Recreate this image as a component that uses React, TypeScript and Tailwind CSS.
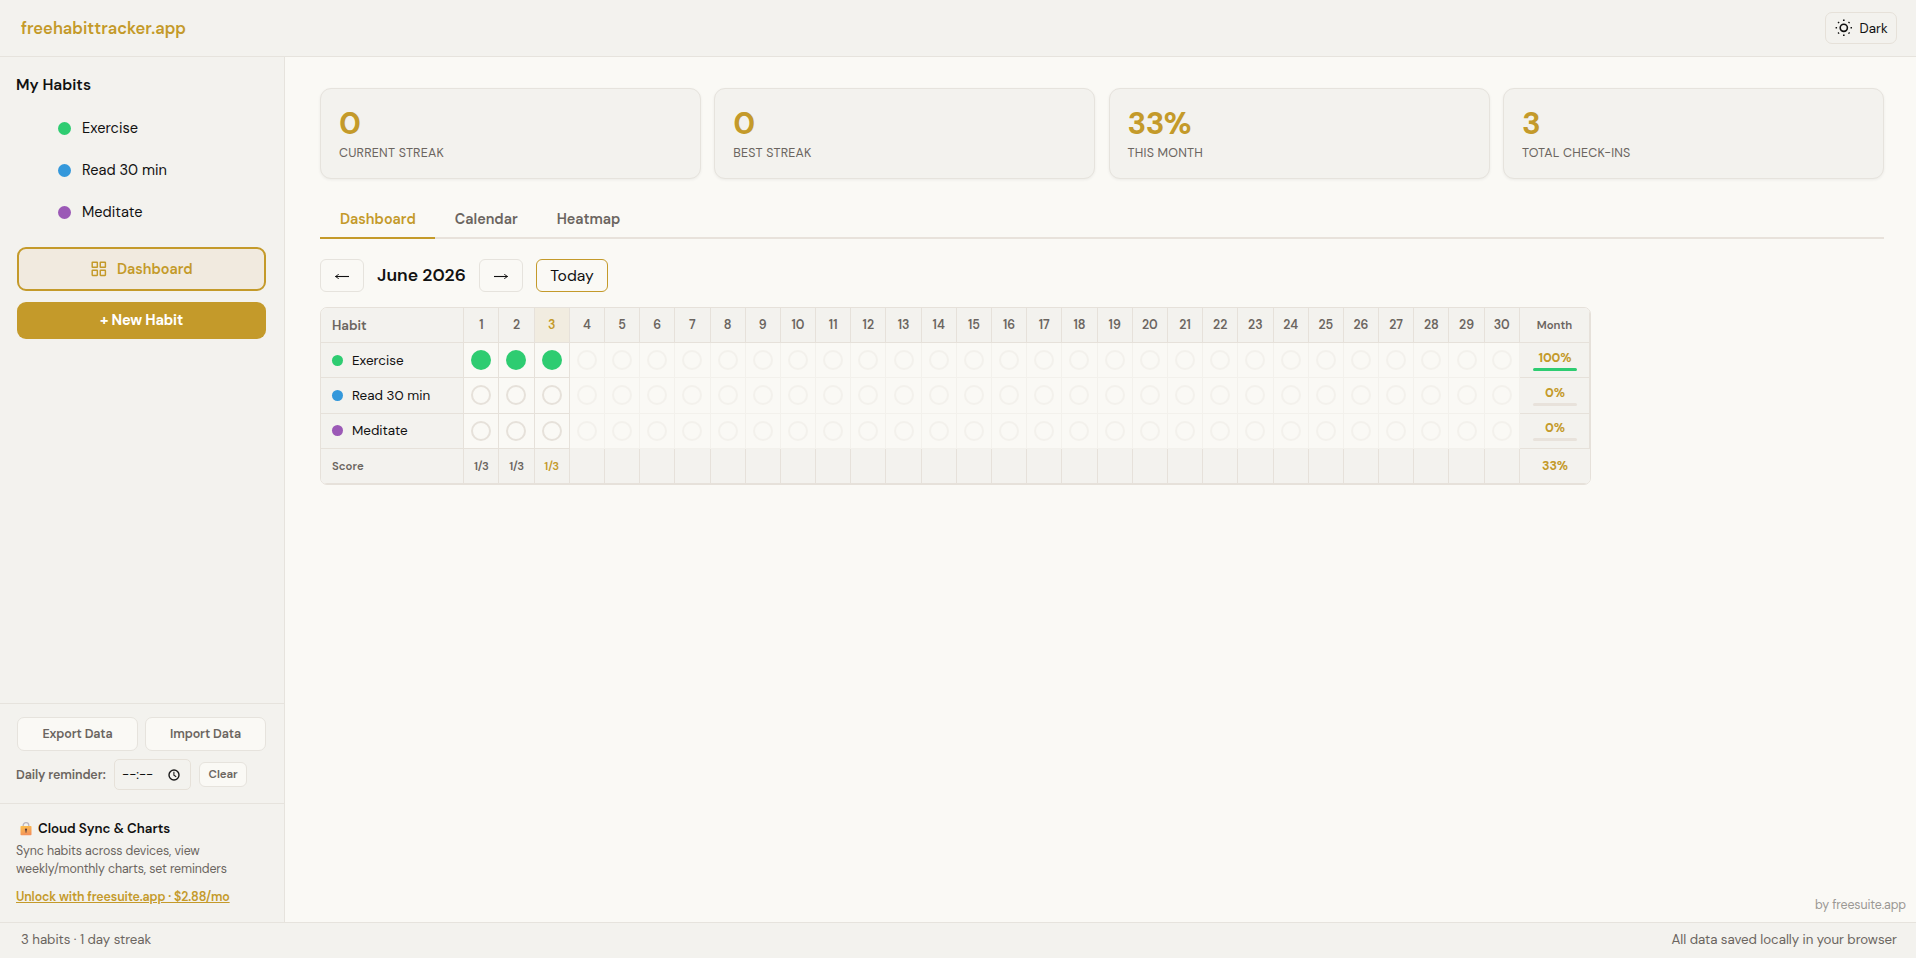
import { Fragment } from 'react';

interface Habit {
  id: string;
  name: string;
  dot: string;
  done: number[];
  month: number;
}

const habits: Habit[] = [
  { id: 'exercise', name: 'Exercise', dot: 'bg-[#2ecc71]', done: [1, 2, 3], month: 100 },
  { id: 'read', name: 'Read 30 min', dot: 'bg-[#3498db]', done: [], month: 0 },
  { id: 'meditate', name: 'Meditate', dot: 'bg-[#9b59b6]', done: [], month: 0 },
];

const stats = [
  { label: 'Current Streak', value: '0' },
  { label: 'Best Streak', value: '0' },
  { label: 'This Month', value: '33%' },
  { label: 'Total Check-ins', value: '3' },
];

const tabs = ['Dashboard', 'Calendar', 'Heatmap'];
const days = Array.from({ length: 30 }, (_, i) => i + 1);
const today = 3;

const SunIcon = () => (
  <svg className="size-[17.6px]" viewBox="0 0 24 24" fill="none" stroke="currentColor" strokeWidth="2.2">
    <circle cx="12" cy="12" r="4.9" />
    <path d="M12 .8v2M12 21.2v2M4.2 4.2l1.3 1.3M18.5 18.5l1.3 1.3M.8 12h2M21.2 12h2M4.2 19.8l1.3-1.3M18.5 5.5l1.3-1.3" />
  </svg>
);

const GridIcon = () => (
  <svg className="size-[17.6px]" viewBox="0 0 24 24" fill="none" stroke="currentColor" strokeWidth="2">
    <rect x="3" y="3" width="7" height="7" rx="0.5" />
    <rect x="14" y="3" width="7" height="7" rx="0.5" />
    <rect x="3" y="14" width="7" height="7" rx="0.5" />
    <rect x="14" y="14" width="7" height="7" rx="0.5" />
  </svg>
);

const ClockIcon = () => (
  <svg className="size-[12px]" viewBox="0 0 12 12" fill="none" stroke="#1a1a1a" strokeWidth="1.4">
    <circle cx="6" cy="6" r="5" />
    <path d="M5.9 2.8v3.4l2.3 1.6" strokeWidth="1.1" />
  </svg>
);

const LockIcon = () => (
  <svg className="h-[14px] w-[12px]" viewBox="0 0 12 14">
    <defs>
      <linearGradient id="lock" x1="0" y1="0" x2="0.3" y2="1">
        <stop offset="0" stopColor="#fcc04a" />
        <stop offset="1" stopColor="#f4935a" />
      </linearGradient>
    </defs>
    <path d="M3.2 5V3.5a2.8 2.8 0 0 1 5.6 0V5" fill="none" stroke="#b9b4be" strokeWidth="1.3" />
    <rect x="0.5" y="4" width="11" height="9.2" rx="0.8" fill="url(#lock)" />
    <circle cx="6" cy="7.6" r="1.1" fill="#5a3b3b" />
    <path d="M6 8v2.6" stroke="#5a3b3b" strokeWidth="1" />
  </svg>
);

const ArrowIcon = ({ flip = false }: { flip?: boolean }) => (
  <svg
    className={flip ? 'mx-auto mt-px h-[7px] w-[14px] rotate-180' : 'mx-auto mt-px h-[7px] w-[14px]'}
    viewBox="0 0 14 7"
    fill="none"
    stroke="currentColor"
  >
    <path d="M0.5 3.5H14" strokeWidth="1.1" />
    <path d="M3.6 1Q2.6 2.8.4 3.5q2.2.7 3.2 2.5" strokeWidth="1" />
  </svg>
);

const Header = () => (
  <header className="flex h-[57px] shrink-0 items-center justify-between border-b border-[#e6e3dd] bg-[#f3f2ee] px-[19px]">
    <div className="pt-[2px] pl-[2px] text-[16.5px] font-semibold text-[#c49a2a]">freehabittracker.app</div>
    <button className="flex h-8 w-[72px] items-center gap-[7px] rounded-[7px] border border-[#e6e1d9] pl-[9px] text-[13.3px]">
      <SunIcon />
      <span className="pt-[2px]">Dark</span>
    </button>
  </header>
);

const Sidebar = () => (
  <aside className="flex w-[285px] shrink-0 flex-col border-r border-[#e6e3dd] bg-[#f3f2ee]">
    <div className="flex-1 pt-[17px] pr-[18px] pl-[17px]">
      <h2 className="-ml-px h-[22px] text-[15.5px] leading-[22px] font-semibold">My Habits</h2>
      <ul className="mt-[11px]">
        {habits.map((habit) => (
          <li key={habit.id} className="flex h-[42px] items-center gap-[11px] pl-[41px] text-[14.6px]">
            <span className={`size-[13px] rounded-full ${habit.dot}`} />
            <span className="pt-px">{habit.name}</span>
          </li>
        ))}
      </ul>
      <button className="mt-[14px] flex h-11 w-full items-center justify-center gap-[9px] rounded-[9px] border-2 border-[#c49a2a] bg-[#f1eadf] text-[14.4px] font-semibold text-[#c49a2a]">
        <GridIcon />
        <span className="pt-[2px]">Dashboard</span>
      </button>
      <button className="mt-[11px] flex h-[37px] w-full items-center justify-center rounded-[9px] bg-[#c49a2a] text-[14.5px] font-bold tracking-[-0.15px] text-white">
        + New Habit
      </button>
    </div>

    <div className="h-[100px] border-t border-[#e6e3dd] pt-[13px] pr-[18px] pl-[17px] text-[12.5px] font-semibold tracking-[-0.1px] text-[#6b6560]">
      <div className="flex gap-[7px]">
        <button className="h-[34px] flex-1 rounded-[7px] border border-[#e6e3dd] bg-[#faf9f5]">Export Data</button>
        <button className="h-[34px] flex-1 rounded-[7px] border border-[#e6e3dd] bg-[#faf9f5]">Import Data</button>
      </div>
      <div className="mt-2 flex items-center">
        <span className="-ml-px w-[98px] pt-px">Daily reminder:</span>
        <div className="flex h-[31px] w-[77px] items-center justify-between rounded-[5px] border border-[#e6e1d9] pr-[10px] pl-[7px] text-[13.2px] font-normal tracking-normal text-[#111]">
          <span>--:--</span>
          <ClockIcon />
        </div>
        <button className="ml-2 h-[25px] w-12 rounded-[6px] border border-[#e6e3dd] bg-[#faf9f5] pt-px text-[11.5px]">
          Clear
        </button>
      </div>
    </div>

    <div className="h-[119px] border-t border-[#e6e3dd] pt-[14px] pl-4 text-[12.4px] tracking-[-0.12px] text-[#6b6560]">
      <div className="flex h-[22px] items-center gap-[6px] pl-1 text-[13.3px] font-semibold tracking-[-0.03px] text-[#111]">
        <LockIcon />
        Cloud Sync &amp; Charts
      </div>
      <p className="mt-[2px] leading-[18px]">
        Sync habits across devices, view
        <br />
        weekly/monthly charts, set reminders
      </p>
      <a className="mt-[10px] block leading-[18px] font-semibold text-[#c49a2a] underline">
        Unlock with freesuite.app · $2.88/mo
      </a>
    </div>
  </aside>
);

const StatCards = () => (
  <div className="grid grid-cols-4 gap-[13.2px]">
    {stats.map((stat) => (
      <div
        key={stat.label}
        className="h-[91px] rounded-[11px] border border-[#e6e3dd] bg-[#f3f2ee] pt-[17px] pl-[18px] shadow-[0_1px_3px_rgba(0,0,0,0.06)]"
      >
        <div className="text-[31.2px] leading-[35px] font-bold tracking-[-0.7px] text-[#c49a2a]">{stat.value}</div>
        <div className="mt-[3px] text-[12.5px] leading-[19px] tracking-[0.2px] text-[#6b6560] uppercase">
          {stat.label}
        </div>
      </div>
    ))}
  </div>
);

const TabBar = () => (
  <div className="mt-[22px] flex h-[38px] border-b-2 border-[#e8e2db] text-[14.4px] font-semibold text-[#6b6560]">
    {tabs.map((tab) => (
      <button
        key={tab}
        className={
          tab === 'Dashboard'
            ? '-mb-[2px] border-b-2 border-[#c49a2a] pt-px pr-[19px] pl-5 text-[#c49a2a]'
            : '-mb-[2px] border-b-2 border-transparent pt-px pr-[19px] pl-5'
        }
      >
        {tab}
      </button>
    ))}
  </div>
);

const MonthNav = () => (
  <div className="mt-5 flex h-[33px] items-center text-[15.7px]">
    <button className="h-[33px] w-11 rounded-[6px] border border-[#e6e3dd]">
      <ArrowIcon />
    </button>
    <h3 className="w-[115px] text-center text-[17.6px] font-semibold">June 2026</h3>
    <button className="h-[33px] w-11 rounded-[6px] border border-[#e6e3dd]">
      <ArrowIcon flip />
    </button>
    <button className="ml-[13px] h-[33px] w-[72px] rounded-[6px] border border-[#c49a2a]">Today</button>
  </div>
);

const cell = 'flex items-center justify-center border-r border-b border-[#e6e1da]';
const scoreCell = `${cell} bg-[#f3f2ee] pt-[2px] text-[11.4px] tracking-[-0.15px]`;

const HabitTable = () => (
  <div className="mt-[15px] grid h-[178px] w-[1271px] auto-rows-[35.2px] grid-cols-[143.2px_repeat(30,35.2px)_1fr] overflow-hidden rounded-[7px] border border-[#e6e1da] text-[12.4px] font-semibold text-[#6b6560]">
    <div className="flex items-center border-r border-b border-[#e6e1da] bg-[#f3f2ee] pt-px pl-[11px] text-[13.3px]">Habit</div>
    {days.map((day) => (
      <div
        key={day}
        className={day === today ? `${cell} bg-[#f1ece0] text-[#c49a2a]` : `${cell} bg-[#f3f2ee]`}
      >
        {day}
      </div>
    ))}
    <div className={`${cell} bg-[#f3f2ee] text-[11.4px]`}>Month</div>

    {habits.map((habit) => (
      <Fragment key={habit.id}>
        <div className="flex items-center gap-[9px] border-r border-b border-[#e6e1da] bg-[#f3f2ee] pl-[11px] text-[13.45px] font-normal text-[#111]">
          <span className={`size-[11px] rounded-full ${habit.dot}`} />
          <span className="pt-px">{habit.name}</span>
        </div>
        {days.map((day) => (
          <div key={day} className={day > today ? `${cell} opacity-30` : cell}>
            {habit.done.includes(day) ? (
              <span className={`size-5 rounded-full ${habit.dot}`} />
            ) : (
              <span className="size-5 rounded-full border-2 border-[#e6e1da]" />
            )}
          </div>
        ))}
        <div className={`${cell} flex-col bg-[#f3f2ee] pl-px text-[12.5px] font-bold tracking-[-0.2px] text-[#c49a2a]`}>
          <span className="leading-[16px]">{habit.month}%</span>
          <div className="mt-[2px] h-[3px] w-11 overflow-hidden rounded-full bg-[#e8e2db]">
            <div className={`h-full ${habit.dot}`} style={{ width: `${habit.month}%` }} />
          </div>
        </div>
      </Fragment>
    ))}

    <div className="flex items-center border-r border-b border-[#e6e1da] bg-[#f3f2ee] pt-[2px] pl-[11px] text-[11.4px]">Score</div>
    {days.map((day) => (
      <div key={day} className={day === today ? `${scoreCell} text-[#c49a2a]` : scoreCell}>
        {day <= today && '1/3'}
      </div>
    ))}
    <div className="flex items-center justify-center border-b border-[#e6e1da] bg-[#f3f2ee] pt-px text-[12.5px] font-bold tracking-[-0.2px] text-[#c49a2a]">
      33%
    </div>
  </div>
);

export default function App() {
  return (
    <div className="flex h-screen flex-col overflow-hidden bg-[#faf9f5] font-['DM_Sans',Inter,sans-serif] text-[#111]">
      <Header />
      <div className="flex min-h-0 flex-1">
        <Sidebar />
        <main className="relative flex-1 pt-[31px] pr-8 pl-[35px]">
          <StatCards />
          <TabBar />
          <MonthNav />
          <HabitTable />
          <span className="absolute right-[10px] bottom-2 text-[12.4px] leading-[18px] tracking-[-0.12px] text-[#9b9894]">
            by freesuite.app
          </span>
        </main>
      </div>
      <footer className="flex h-9 shrink-0 items-center justify-between border-t border-[#e6e3dd] bg-[#f3f2ee] px-[19px] pb-px text-[13.3px] tracking-[-0.04px] text-[#6b6560]">
        <span className="pl-[2px]">3 habits · 1 day streak</span>
        <span>All data saved locally in your browser</span>
      </footer>
    </div>
  );
}
